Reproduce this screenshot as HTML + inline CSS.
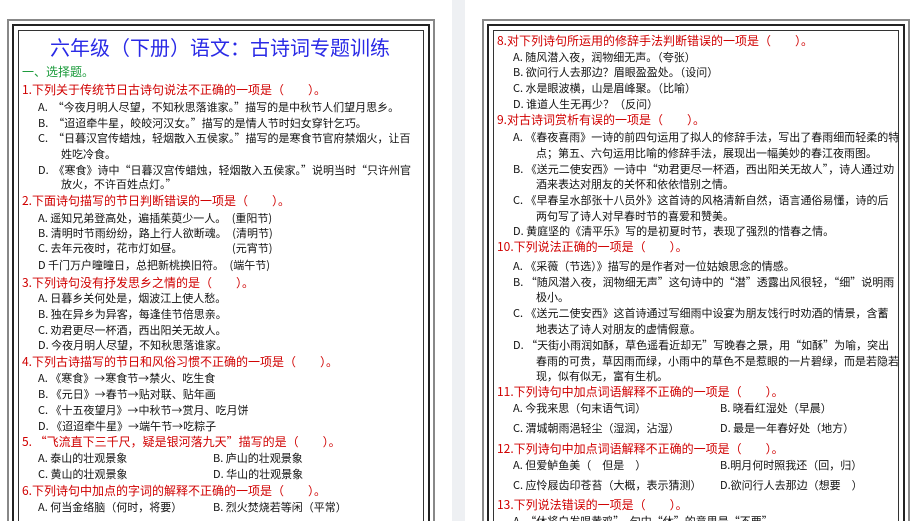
<!DOCTYPE html>
<html><head><meta charset="utf-8"><style>
html,body{margin:0;width:919px;height:521px;overflow:hidden}
body{background:#eef0f3;font-family:"Noto Sans CJK SC","Liberation Sans",sans-serif;position:relative}
.pg{position:absolute;top:0;height:521px;background:#fff}
.b{position:absolute;box-sizing:border-box}
.t{position:absolute;white-space:nowrap;font-size:11px;line-height:14px;color:#111}
.q{color:#d00000;font-size:12px;line-height:15px}
</style></head><body>
<div class="pg" style="left:0;width:452px"></div>
<div class="pg" style="left:465px;width:454px"></div>
<div class="b" style="left:7px;top:19px;width:428px;height:502px;border:2px solid #888;border-bottom:none"></div>
<div class="b" style="left:12px;top:24px;width:418px;height:497px;border:2px solid #222;border-bottom:none"></div>
<div class="b" style="left:18px;top:30px;width:406px;height:491px;border:1px solid #333;border-bottom:none"></div>
<div class="b" style="left:482px;top:19px;width:428px;height:502px;border:2px solid #888;border-bottom:none"></div>
<div class="b" style="left:487px;top:24px;width:418px;height:497px;border:2px solid #222;border-bottom:none"></div>
<div class="b" style="left:493px;top:30px;width:406px;height:491px;border:1px solid #333;border-bottom:none"></div>

<div class="t" style="left:50px;top:34px;font-size:20px;line-height:26px;color:#2a2ae6">六年级（下册）语文：古诗词专题训练</div>
<div class="t" style="left:22px;top:65px;font-size:12px;color:#1a9a3a">一、选择题。</div>
<div class="t q" style="left:22px;top:82px">1.下列关于传统节日古诗句说法不正确的一项是（　　）。</div>
<div class="t" style="left:38px;top:100px">A.&nbsp; “今夜月明人尽望，不知秋思落谁家。”描写的是中秋节人们望月思乡。</div>
<div class="t" style="left:38px;top:116px">B.&nbsp; “迢迢牵牛星，皎皎河汉女。”描写的是情人节时妇女穿针乞巧。</div>
<div class="t" style="left:38px;top:131px">C.&nbsp; “日暮汉宫传蜡烛，轻烟散入五侯家。”描写的是寒食节官府禁烟火，让百</div>
<div class="t" style="left:61px;top:147px">姓吃冷食。</div>
<div class="t" style="left:38px;top:163px">D.&nbsp; 《寒食》诗中“日暮汉宫传蜡烛，轻烟散入五侯家。”说明当时“只许州官</div>
<div class="t" style="left:61px;top:177px">放火，不许百姓点灯。”</div>
<div class="t q" style="left:22px;top:193px">2.下面诗句描写的节日判断错误的一项是（　　）。</div>
<div class="t" style="left:38px;top:211px">A. 遥知兄弟登高处，遍插茱萸少一人。　(重阳节)</div>
<div class="t" style="left:38px;top:226px">B. 清明时节雨纷纷，路上行人欲断魂。　(清明节)</div>
<div class="t" style="left:38px;top:241px">C. 去年元夜时，花市灯如昼。　　　　　(元宵节)</div>
<div class="t" style="left:38px;top:258px">D 千门万户曈曈日，总把新桃换旧符。　(端午节)</div>
<div class="t q" style="left:22px;top:275px">3.下列诗句没有抒发思乡之情的是（　　）。</div>
<div class="t" style="left:38px;top:291px">A. 日暮乡关何处是，烟波江上使人愁。</div>
<div class="t" style="left:38px;top:307px">B. 独在异乡为异客，每逢佳节倍思亲。</div>
<div class="t" style="left:38px;top:323px">C. 劝君更尽一杯酒，西出阳关无故人。</div>
<div class="t" style="left:38px;top:338px">D. 今夜月明人尽望，不知秋思落谁家。</div>
<div class="t q" style="left:22px;top:354px">4.下列古诗描写的节日和风俗习惯不正确的一项是（　　）。</div>
<div class="t" style="left:38px;top:371px">A. 《寒食》→寒食节→禁火、吃生食</div>
<div class="t" style="left:38px;top:387px">B. 《元日》→春节→贴对联、贴年画</div>
<div class="t" style="left:38px;top:403px">C. 《十五夜望月》→中秋节→赏月、吃月饼</div>
<div class="t" style="left:38px;top:419px">D. 《迢迢牵牛星》→端午节→吃粽子</div>
<div class="t q" style="left:22px;top:434px">5. “飞流直下三千尺，疑是银河落九天”描写的是（　　）。</div>
<div class="t" style="left:38px;top:451px">A. 泰山的壮观景象</div>
<div class="t" style="left:213px;top:451px">B. 庐山的壮观景象</div>
<div class="t" style="left:38px;top:467px">C. 黄山的壮观景象</div>
<div class="t" style="left:213px;top:467px">D. 华山的壮观景象</div>
<div class="t q" style="left:22px;top:483px">6.下列诗句中加点的字词的解释不正确的一项是（　　）。</div>
<div class="t" style="left:38px;top:500px">A. 何当金络脑（何时，将要）</div>
<div class="t" style="left:213px;top:500px">B. 烈火焚烧若等闲（平常）</div>

<div class="t q" style="left:497px;top:33px">8.对下列诗句所运用的修辞手法判断错误的一项是（　　）。</div>
<div class="t" style="left:513px;top:50px">A. 随风潜入夜，润物细无声。（夸张）</div>
<div class="t" style="left:513px;top:65px">B. 欲问行人去那边？眉眼盈盈处。（设问）</div>
<div class="t" style="left:513px;top:81px">C. 水是眼波横，山是眉峰聚。（比喻）</div>
<div class="t" style="left:513px;top:97px">D. 谁道人生无再少？（反问）</div>
<div class="t q" style="left:497px;top:112px">9.对古诗词赏析有误的一项是（　　）。</div>
<div class="t" style="left:513px;top:130px">A. 《春夜喜雨》一诗的前四句运用了拟人的修辞手法，写出了春雨细而轻柔的特</div>
<div class="t" style="left:536px;top:146px">点；第五、六句运用比喻的修辞手法，展现出一幅美妙的春江夜雨图。</div>
<div class="t" style="left:513px;top:162px">B. 《送元二使安西》一诗中“劝君更尽一杯酒，西出阳关无故人”，诗人通过劝</div>
<div class="t" style="left:536px;top:177px">酒来表达对朋友的关怀和依依惜别之情。</div>
<div class="t" style="left:513px;top:193px">C. 《早春呈水部张十八员外》这首诗的风格清新自然，语言通俗易懂，诗的后</div>
<div class="t" style="left:536px;top:209px">两句写了诗人对早春时节的喜爱和赞美。</div>
<div class="t" style="left:513px;top:224px">D. 黄庭坚的《清平乐》写的是初夏时节，表现了强烈的惜春之情。</div>
<div class="t q" style="left:497px;top:239px">10.下列说法正确的一项是（　　）。</div>
<div class="t" style="left:513px;top:259px">A. 《采薇（节选）》描写的是作者对一位姑娘思念的情感。</div>
<div class="t" style="left:513px;top:275px">B. “随风潜入夜，润物细无声”这句诗中的“潜”透露出风很轻，“细”说明雨</div>
<div class="t" style="left:536px;top:290px">极小。</div>
<div class="t" style="left:513px;top:306px">C. 《送元二使安西》这首诗通过写细雨中设宴为朋友饯行时劝酒的情景，含蓄</div>
<div class="t" style="left:536px;top:322px">地表达了诗人对朋友的虚情假意。</div>
<div class="t" style="left:513px;top:338px">D. “天街小雨润如酥，草色遥看近却无”写晚春之景，用“如酥”为喻，突出</div>
<div class="t" style="left:536px;top:354px">春雨的可贵，草因雨而绿，小雨中的草色不是惹眼的一片碧绿，而是若隐若</div>
<div class="t" style="left:536px;top:369px">现，似有似无，富有生机。</div>
<div class="t q" style="left:497px;top:384px">11.下列诗句中加点词语解释不正确的一项是（　　）。</div>
<div class="t" style="left:513px;top:401px">A. 今我来思（句末语气词）</div>
<div class="t" style="left:720px;top:401px">B. 晓看红湿处（早晨）</div>
<div class="t" style="left:513px;top:421px">C. 渭城朝雨浥轻尘（湿润，沾湿）</div>
<div class="t" style="left:720px;top:421px">D. 最是一年春好处（地方）</div>
<div class="t q" style="left:497px;top:441px">12.下列诗句中加点词语解释不正确的一项是（　　）。</div>
<div class="t" style="left:513px;top:458px">A. 但爱鲈鱼美（　但是　）</div>
<div class="t" style="left:720px;top:458px">B.明月何时照我还（回，归）</div>
<div class="t" style="left:513px;top:478px">C. 应怜屐齿印苍苔（大概，表示猜测）</div>
<div class="t" style="left:720px;top:478px">D.欲问行人去那边（想要　）</div>
<div class="t q" style="left:497px;top:497px">13.下列说法错误的一项是（　　）。</div>
<div class="t" style="left:513px;top:514px">A. “休将白发唱黄鸡”，句中“休”的意思是“不要”。</div>
</body></html>
